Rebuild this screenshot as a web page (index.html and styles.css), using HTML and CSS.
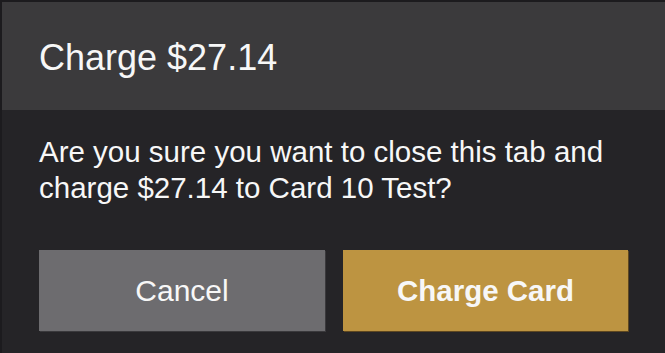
FILE: index.html
```html
<!DOCTYPE html>
<html lang="en">
<head>
<meta charset="utf-8">
<title>Charge</title>
<link rel="stylesheet" href="styles.css">
</head>
<body>
<div class="screen">
  <div class="dialog">
    <div class="dialog-header">
      <h1 class="dialog-title">Charge $27.14</h1>
    </div>
    <div class="dialog-body">
      <p class="dialog-message">Are you sure you want to close this tab and charge $27.14 to Card 10 Test?</p>
      <div class="dialog-actions">
        <button class="btn btn-cancel" type="button">Cancel</button>
        <button class="btn btn-charge" type="button">Charge Card</button>
      </div>
    </div>
  </div>
</div>
</body>
</html>
```

FILE: styles.css
```css
html, body {
  margin: 0;
  padding: 0;
  background: #1c1b1e;
}

.screen {
  width: 665px;
  height: 353px;
  overflow: hidden;
  padding: 2px 0 0 2px;
  box-sizing: border-box;
  background: #1c1b1e;
  font-family: "Liberation Sans", Arial, Helvetica, sans-serif;
  color: #f7f7f7;
}

.dialog {
  display: flex;
  flex-direction: column;
  height: 100%;
  background: #252427;
}

.dialog-header {
  background: #3b3a3c;
  height: 108px;
  box-sizing: border-box;
  padding: 37.5px 37px 0 37px;
}

.dialog-title {
  margin: 0;
  font-size: 36px;
  line-height: 36px;
  font-weight: normal;
  letter-spacing: 0;
}

.dialog-body {
  padding: 24px 37px 0 37px;
  display: flex;
  flex-direction: column;
}

.dialog-message {
  margin: 0;
  font-size: 29.5px;
  line-height: 36px;
}

.dialog-actions {
  display: flex;
  gap: 18px;
  margin-top: 44px;
}

.btn {
  border: none;
  margin: 0;
  padding: 0;
  height: 81px;
  font-family: "Liberation Sans", Arial, Helvetica, sans-serif;
  color: #f7f7f7;
  font-size: 30px;
  cursor: pointer;
}

.btn-cancel {
  width: 286px;
  background: #6d6c6f;
  font-weight: normal;
  box-shadow: 1px 1px 0 #3a393c;
}

.btn-charge {
  width: 285px;
  background: #bd9441;
  font-weight: bold;
  font-size: 29.5px;
  box-shadow: 1px 1px 0 #5e4720;
}
```
